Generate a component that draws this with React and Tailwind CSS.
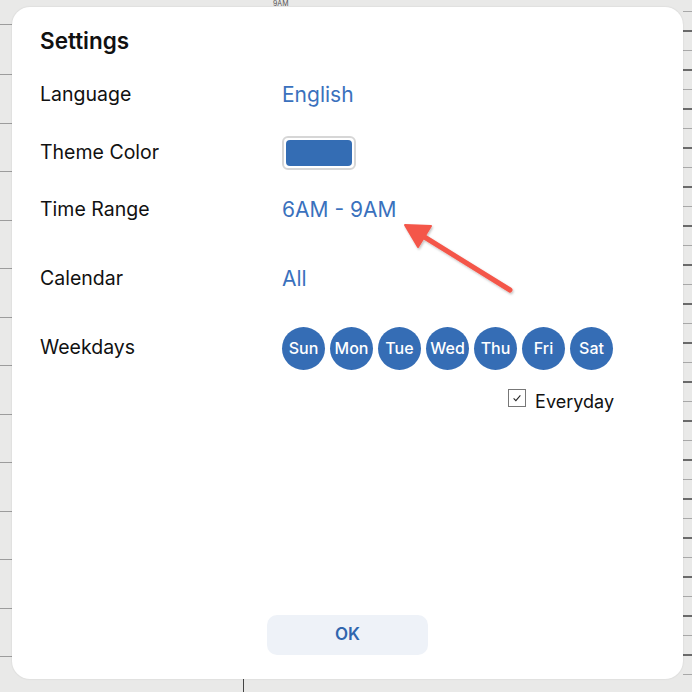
import React, { useState } from 'react';

const DAYS = ['Sun', 'Mon', 'Tue', 'Wed', 'Thu', 'Fri', 'Sat'];

// calendar grid that peeks out behind the dialog
const LeftRail = () => (
  <div className="flex flex-col w-[12px]">
    <div className="h-[25px] border-b border-[#9c9c9c]"></div>
    <div className="h-[50px] border-b border-[#9c9c9c]"></div>
    {Array.from({ length: 12 }).map((_, i) => (
      <div key={i} className="h-[48.5px] shrink-0 border-b border-[#9c9c9c]"></div>
    ))}
  </div>
);

const RightRail = () => (
  <div className="flex flex-col w-[9px]">
    <div className="h-[12px] shrink-0 border-b border-[#a8a8a8]"></div>
    {Array.from({ length: 35 }).map((_, i) => (
      <div
        key={i}
        className={
          i % 2 === 0
            ? 'h-[19.5px] shrink-0 border-b-2 border-[#6a6a6a]'
            : 'h-[19.5px] shrink-0 border-b border-[#a8a8a8]'
        }
      ></div>
    ))}
  </div>
);

const Row = ({ label, height, children }) => (
  <div className="flex items-center pt-[2px]" style={{ height }}>
    <div className="w-[242px] shrink-0 text-[19.5px] text-[#111]">{label}</div>
    <div className="flex items-center">{children}</div>
  </div>
);

export default function App() {
  const [everyday, setEveryday] = useState(true);

  return (
    <div
      className="relative w-[692px] h-[692px] overflow-hidden bg-[#e9e9e8] flex justify-between"
      style={{ fontFamily: 'Inter, "Liberation Sans", sans-serif' }}
    >
      <LeftRail />
      <div className="flex-1 flex flex-col items-stretch">
        <div className="h-[7px] flex items-center">
          <span className="ml-[261px] text-[7px] leading-[7px] text-[#555]">9AM</span>
        </div>
        <div className="flex-1"></div>
        <div className="h-[13px] flex">
          <div className="ml-[231px] w-px bg-[#444]"></div>
        </div>
      </div>
      <RightRail />

      {/* dialog */}
      <div className="absolute left-[12px] top-[7px] w-[671px] h-[672px] bg-white rounded-[18px] shadow-[0_0_2px_rgba(0,0,0,0.12)] flex flex-col pl-[28px] pt-[14px] pb-[24px]">
        <div className="h-[40px] flex items-center text-[22.5px] font-semibold text-[#111]">Settings</div>

        <Row label="Language" height={66}>
          <span className="text-[21px] text-[#3a71bd]">English</span>
        </Row>

        <Row label="Theme Color" height={50}>
          <div className="w-[74px] h-[34px] rounded-[6px] border-2 border-[#d6d6d6] p-[2px]">
            <div className="w-full h-full rounded-[4px] bg-[#346db4]"></div>
          </div>
        </Row>

        <Row label="Time Range" height={64}>
          <span className="text-[21px] text-[#3a71bd]">6AM - 9AM</span>
        </Row>

        <Row label="Calendar" height={74}>
          <span className="text-[21px] text-[#3a71bd]">All</span>
        </Row>

        <Row label="Weekdays" height={64}>
          <div className="flex gap-[5px]">
            {DAYS.map((d) => (
              <button
                key={d}
                className="w-[43px] h-[43px] rounded-full bg-[#356db5] text-white text-[16px] font-medium flex items-center justify-center"
              >
                {d}
              </button>
            ))}
          </div>
        </Row>

        <div className="h-[44px] flex items-center">
          <div className="ml-[242px] w-[332px] flex items-center justify-end">
            <button
              onClick={() => setEveryday(!everyday)}
              className="w-[18px] h-[18px] border border-[#777] flex items-center justify-center mr-[9px] mt-[-6px]"
            >
              {everyday && (
                <svg viewBox="0 0 16 16" className="w-[12px] h-[12px]" fill="none" stroke="#222" strokeWidth="1.4">
                  <path d="M3.5 8.5l3 3 6-7" />
                </svg>
              )}
            </button>
            <span className="text-[18px] text-[#111]">Everyday</span>
          </div>
        </div>

        <div className="flex-1"></div>

        <div className="flex justify-center pr-[28px]">
          <button className="w-[161px] h-[40px] rounded-[10px] bg-[#eef2f8] text-[17px] font-semibold text-[#3066ae]">
            OK
          </button>
        </div>
      </div>

      {/* annotation arrow */}
      <svg className="absolute left-0 top-0 pointer-events-none" width="692" height="692">
        <defs>
          <filter id="sh" x="-20%" y="-20%" width="140%" height="140%">
            <feDropShadow dx="1" dy="1.5" stdDeviation="1.2" floodColor="#000" floodOpacity="0.25" />
          </filter>
        </defs>
        <g filter="url(#sh)" fill="#f4574a" stroke="#f4574a" strokeLinecap="round" strokeLinejoin="round">
          <line x1="510" y1="290" x2="418" y2="233" strokeWidth="5" />
          <polygon points="405,225 431,226 418,247" strokeWidth="2" />
        </g>
      </svg>
    </div>
  );
}
